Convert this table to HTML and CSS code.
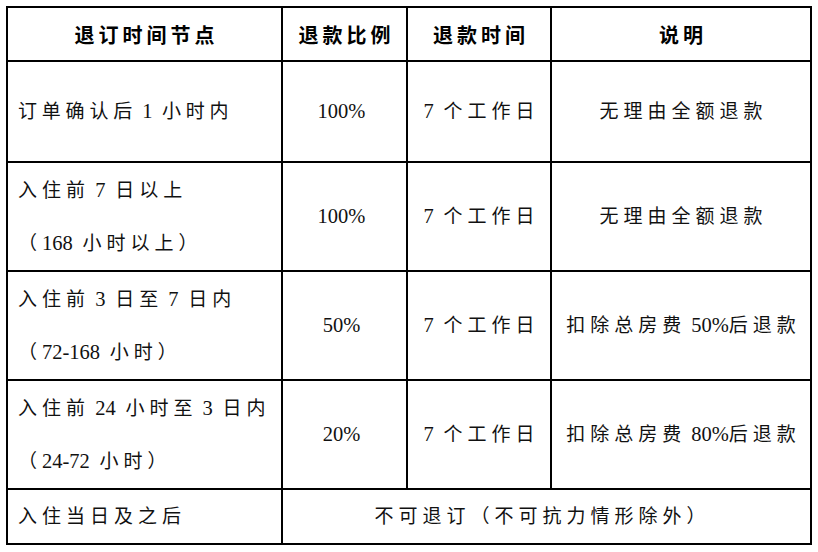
FILE: index.html
```html
<!DOCTYPE html>
<html lang="zh-CN">
<head>
<meta charset="utf-8">
<title>退订规则</title>
<link rel="stylesheet" href="styles.css">
</head>
<body>
<table class="refund">
  <colgroup>
    <col class="c1">
    <col class="c2">
    <col class="c3">
    <col class="c4">
  </colgroup>
  <thead>
    <tr class="head">
      <th>退订时间节点</th>
      <th>退款比例</th>
      <th>退款时间</th>
      <th>说明</th>
    </tr>
  </thead>
  <tbody>
    <tr class="r1">
      <td class="when tight">订单确认后<span class="n"> 1</span> 小时内</td>
      <td class="mid num"><span class="n">100%</span></td>
      <td class="mid"><span class="n">7</span> 个工作日</td>
      <td class="mid">无理由全额退款</td>
    </tr>
    <tr class="r2">
      <td class="when">入住前<span class="n"> 7</span> 日以上<br>（<span class="n">168</span> 小时以上）</td>
      <td class="mid num"><span class="n">100%</span></td>
      <td class="mid"><span class="n">7</span> 个工作日</td>
      <td class="mid">无理由全额退款</td>
    </tr>
    <tr class="r3">
      <td class="when">入住前<span class="n"> 3</span> 日至<span class="n"> 7</span> 日内<br>（<span class="n">72-168</span> 小时）</td>
      <td class="mid num"><span class="n">50%</span></td>
      <td class="mid"><span class="n">7</span> 个工作日</td>
      <td class="mid">扣除总房费<span class="n"> 50%</span>后退款</td>
    </tr>
    <tr class="r4">
      <td class="when">入住前<span class="n"> 24</span> 小时至<span class="n"> 3</span> 日内<br>（<span class="n">24-72</span> 小时）</td>
      <td class="mid num"><span class="n">20%</span></td>
      <td class="mid"><span class="n">7</span> 个工作日</td>
      <td class="mid">扣除总房费<span class="n"> 80%</span>后退款</td>
    </tr>
    <tr class="r5">
      <td class="when">入住当日及之后</td>
      <td class="mid wide" colspan="3">不可退订（不可抗力情形除外）</td>
    </tr>
  </tbody>
</table>
</body>
</html>
```

FILE: styles.css
```css
html, body {
  margin: 0;
  padding: 0;
  background: #ffffff;
}

body {
  font-family: "Liberation Serif", "Noto Sans CJK SC", serif;
  color: #111111;
}

.refund {
  margin: 6px 0 0 6px;
  border-collapse: collapse;
  table-layout: fixed;
  width: 806px;
}

.c1 { width: 275px; }
.c2 { width: 125px; }
.c3 { width: 144px; }
.c4 { width: 260px; }

.refund th,
.refund td {
  border: 2px solid #000000;
  padding: 0;
  white-space: nowrap;
  overflow: hidden;
}

.refund th {
  font-family: "Liberation Serif", "Noto Sans CJK SC", serif;
  font-weight: 700;
  font-size: 20px;
  letter-spacing: 4px;
  text-align: center;
  padding-left: 4px;
  color: #000000;
}

.refund td {
  font-size: 19px;
  font-weight: 400;
  letter-spacing: 5px;
  line-height: 52px;
}

.refund td.when {
  text-align: left;
  padding-left: 10px;
}

.refund td.tight {
  letter-spacing: 4.8px;
}

.refund td.mid {
  text-align: center;
  padding-left: 5px;
}

.refund td.num {
  padding-left: 0;
  padding-right: 6px;
}

.refund td.wide {
  letter-spacing: 5px;
  padding-left: 0;
  padding-right: 8px;
}

.n {
  font-size: 20.5px;
  letter-spacing: 0;
}

.head { height: 54px; }
.r1 { height: 101px; }
.r2 { height: 109px; }
.r3 { height: 109px; }
.r4 { height: 109px; }
.r5 { height: 55px; }
```
